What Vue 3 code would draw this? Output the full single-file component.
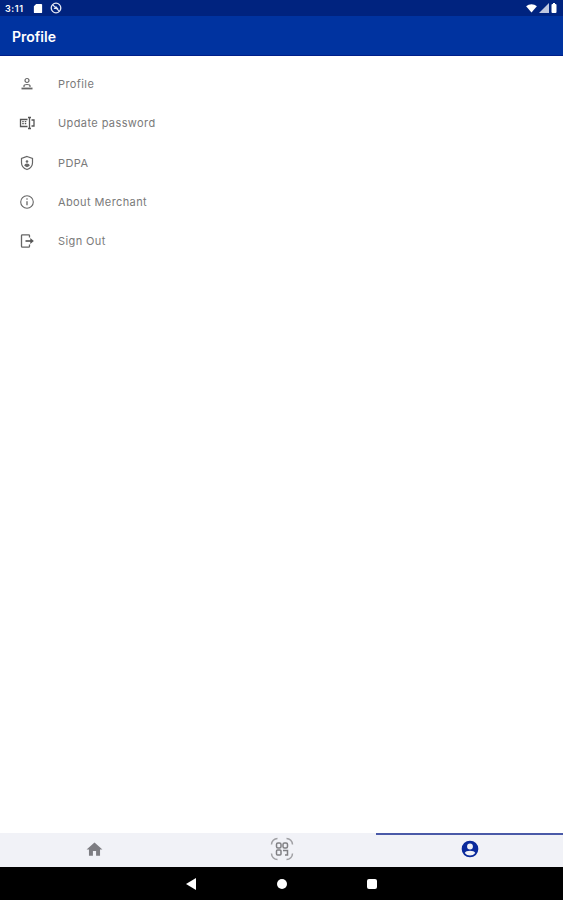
<template>
  <div class="screen">
    <div class="status-bar">
      <div class="status-left">
        <span class="time">3:11</span>
        <svg viewBox="0 0 10 12" width="10" height="11"><path d="M3 1h5.500A1 1 0 0 1 9.500 2v8a1 1 0 0 1-1 1h-7a1 1 0 0 1-1-1V3.500z" fill="#fff" /></svg>
        <svg viewBox="0 0 12 12" width="12" height="12">
          <circle cx="6" cy="6" r="4.800" fill="none" stroke="#e4e8f4" stroke-width="1.300" />
          <path d="M2.800 2.800l6.400 6.400" stroke="#e4e8f4" stroke-width="1.200" />
          <path d="M3.500 7l2.500-3 2.500 3z" fill="#e4e8f4" />
        </svg>
      </div>
      <div class="status-right">
        <svg viewBox="0 0 12 10" width="11" height="9"><path d="M0 2.500C3.300-.5 8.700-.5 12 2.500L6 9.500z" fill="#fff" /></svg>
        <svg viewBox="0 0 10 10" width="10" height="10"><path d="M10 0v10H0z" fill="#fff" opacity="0.75" /></svg>
        <svg viewBox="0 0 6 10" width="6" height="10"><path d="M1.500 1H2V0h2v1h.500a1 1 0 0 1 1 1v7a1 1 0 0 1-1 1h-3a1 1 0 0 1-1-1V2a1 1 0 0 1 1-1z" fill="#fff" /></svg>
      </div>
    </div>

    <header class="app-bar">Profile</header>

    <main class="menu">
      <div v-for="item in items" :key="item.label" class="menu-row">
        <span class="menu-icon">
          <svg v-if="item.icon === 'person'" viewBox="0 0 16 16" width="16" height="16" fill="none" stroke="#666" stroke-width="1.200">
            <circle cx="8" cy="4.500" r="2" />
            <path d="M5 11V9.800c0-.8 1.300-1.300 3-1.300s3 .5 3 1.300V11" />
            <path d="M2.500 12.500h11" stroke-width="1.800" />
          </svg>
          <svg v-else-if="item.icon === 'password'" viewBox="0 0 16 16" width="16" height="16" fill="none" stroke="#555" stroke-width="1.300">
            <path d="M8.500 4.500h-7v7h7" />
            <path d="M10.500 2v12M9 2.500h3M9 13.500h3M12.500 5H15v6h-2.500" />
            <path d="M4 6v4M6.500 6v4" stroke-width="1.500" stroke-dasharray="1.200 .7" />
          </svg>
          <svg v-else-if="item.icon === 'shield'" viewBox="0 0 16 16" width="16" height="16" fill="none" stroke="#666" stroke-width="1.200">
            <path d="M8 1.500l5.500 2v4.200c0 3.200-2.300 5.700-5.500 6.800-3.200-1.100-5.500-3.600-5.500-6.800V3.500z" />
            <circle cx="8" cy="6.500" r="1.300" fill="#666" stroke="none" />
            <path d="M5.200 10.500c.4-1.300 1.400-2 2.800-2s2.400.7 2.800 2c-.7.8-1.700 1.400-2.800 1.700-1.100-.3-2.100-.9-2.800-1.700z" fill="#666" stroke="none" />
          </svg>
          <svg v-else-if="item.icon === 'info'" viewBox="0 0 16 16" width="16" height="16" fill="none" stroke="#666" stroke-width="1.100">
            <circle cx="8" cy="8" r="6.300" />
            <path d="M8 7.300v4" stroke-width="1.300" />
            <circle cx="8" cy="5" r=".8" fill="#666" stroke="none" />
          </svg>
          <svg v-else viewBox="0 0 16 16" width="16" height="16" fill="none" stroke="#666" stroke-width="1.300">
            <path d="M10.500 4.500V2.700a.9.900 0 0 0-.9-.9H3.400a.9.900 0 0 0-.9.900v10.600a.9.900 0 0 0 .9.900h6.200a.9.900 0 0 0 .9-.9v-1.800" />
            <path d="M6.500 8h6.500" stroke-width="1.800" />
            <path d="M11.300 5L14.800 8l-3.500 3z" fill="#555" stroke="none" />
          </svg>
        </span>
        <span class="menu-label">{{ item.label }}</span>
      </div>
    </main>

    <nav class="bottom-nav">
      <div class="tab">
        <svg viewBox="0 0 24 24" width="19" height="19"><path d="M10 20v-6h4v6h5v-8h3L12 3 2 12h3v8z" fill="#7d7d82" /></svg>
      </div>
      <div class="tab">
        <svg viewBox="0 0 24 24" width="24" height="24" fill="none" stroke="#a0a0a4" stroke-width="1.500">
          <path d="M1.500 7.500A6 6 0 0 1 7.500 1.500M16.500 1.500a6 6 0 0 1 6 6M22.500 16.500a6 6 0 0 1-6 6M7.500 22.500a6 6 0 0 1-6-6" />
          <g stroke="#808084" stroke-width="1.500">
            <rect x="6.500" y="6" width="4.500" height="5" rx="1.500" />
            <rect x="13" y="6" width="4.500" height="5" rx="1.500" />
            <rect x="6.500" y="13" width="4.500" height="5" rx="1" />
            <path d="M13 13.500h4.500v4.500H15" />
          </g>
        </svg>
      </div>
      <div class="tab active">
        <svg viewBox="0 0 24 24" width="20" height="20"><path d="M12 2a10 10 0 1 0 0 20 10 10 0 0 0 0-20zm0 3.500a3.500 3.500 0 1 1 0 7 3.500 3.500 0 0 1 0-7zm0 14.300a8 8 0 0 1-6.300-3c.7-1.700 3.300-2.700 6.300-2.700s5.600 1 6.300 2.700a8 8 0 0 1-6.300 3z" fill="#0a2a9c" /></svg>
      </div>
    </nav>

    <div class="system-nav">
      <svg viewBox="0 0 12 12" width="12" height="12"><path d="M11 0v12L1 6z" fill="#fff" /></svg>
      <span class="sys-circle"></span>
      <span class="sys-square"></span>
    </div>
  </div>
</template>

<script setup>
const items = [
  { label: 'Profile', icon: 'person' },
  { label: 'Update password', icon: 'password' },
  { label: 'PDPA', icon: 'shield' },
  { label: 'About Merchant', icon: 'info' },
  { label: 'Sign Out', icon: 'exit' },
]
</script>

<style>
html, body { margin: 0; background: #fff; }
</style>

<style scoped>
.screen {
  width: 563px;
  height: 900px;
  display: flex;
  flex-direction: column;
  font-family: Inter, "Open Sans", sans-serif;
  overflow: hidden;
}

.status-bar {
  height: 16px;
  flex: none;
  background: #00237f;
  display: flex;
  justify-content: space-between;
  align-items: center;
  padding: 0 5px;
  box-sizing: border-box;
}
.status-left, .status-right { display: flex; align-items: center; }
.status-left { gap: 7px; }
.status-right { gap: 2px; padding-right: 1px; }
.time { color: #fff; font-size: 9px; font-weight: 600; letter-spacing: 0.6px; margin-right: 2px; }

.app-bar {
  height: 40px;
  flex: none;
  box-sizing: border-box;
  background: #0033a0;
  border-bottom: 1px solid #001f8a;
  color: #fff;
  font-size: 14px;
  font-weight: 600;
  line-height: 41px;
  padding-left: 12px;
}

.menu {
  flex: 1;
  padding-top: 8.500px;
  background: #fff;
}
.menu-row {
  height: 39.250px;
  display: flex;
  align-items: center;
  padding-left: 19px;
}
.menu-icon {
  width: 16px;
  height: 16px;
  display: flex;
  margin-right: 23px;
}
.menu-label {
  color: #7a7a7a;
  font-size: 11px;
  letter-spacing: 0.4px;
}

.bottom-nav {
  height: 34px;
  flex: none;
  background: #f1f2f7;
  display: grid;
  grid-template-columns: 188px 188px 187px;
}
.tab {
  display: flex;
  align-items: center;
  justify-content: center;
  box-sizing: border-box;
  padding-bottom: 2px;
}
.tab.active { border-top: 2px solid #4a5aa8; padding-bottom: 4px; }

.system-nav {
  height: 33px;
  flex: none;
  background: #000;
  display: flex;
  align-items: center;
  padding-left: 185px;
}
.sys-circle {
  width: 10px;
  height: 10px;
  border-radius: 50%;
  background: #fff;
  margin-left: 80px;
}
.sys-square {
  width: 10px;
  height: 10px;
  border-radius: 2px;
  background: #fff;
  margin-left: 80px;
}
</style>
